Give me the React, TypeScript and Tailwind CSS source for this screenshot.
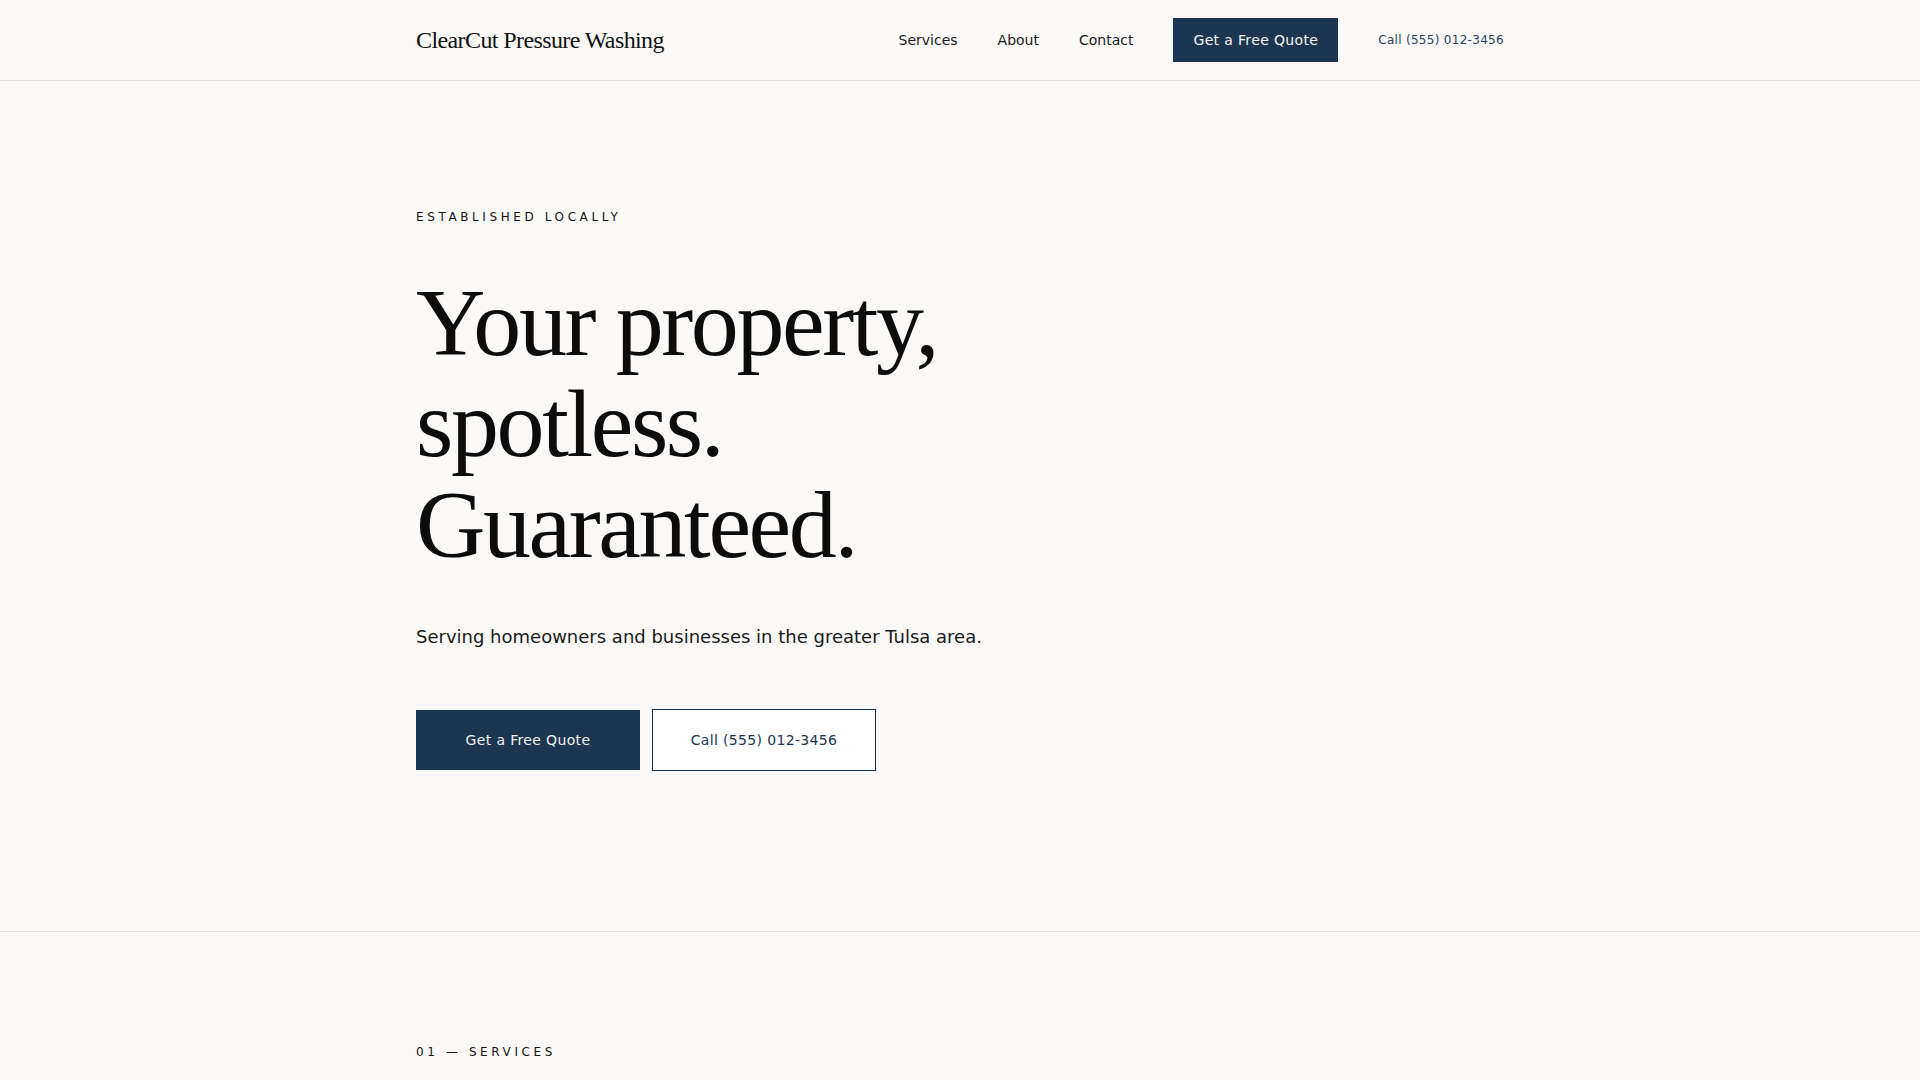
const navLinks = ['Services', 'About', 'Contact']

const sans = "font-['DejaVu_Sans',sans-serif]"
const serif = "font-['Liberation_Serif',serif]"

function Header() {
  return (
    <header className="box-content h-20 border-b border-[#e4e3e0] bg-[#faf9f7]">
      <div className="max-w-6xl mx-auto px-8 h-full flex items-center justify-between">
        <a className={`${serif} text-2xl tracking-tight text-[#111111]`}>ClearCut Pressure Washing</a>
        <nav className={`${sans} flex items-center gap-10 text-sm text-[#1a1a1a]`}>
          {navLinks.map((link) => (
            <a key={link}>{link}</a>
          ))}
          <button className="bg-[#1c3550] text-[#f5f5f2] px-5 py-3 tracking-wide">Get a Free Quote</button>
          <a className="text-xs tracking-wide text-[#2b4160]">Call (555) 012-3456</a>
        </nav>
      </div>
    </header>
  )
}

function Hero() {
  return (
    <section className="border-b border-[#e4e3e0]">
      <div className="max-w-6xl mx-auto px-8 pt-32 pb-40">
        <p className={`${sans} text-xs uppercase tracking-[0.3em] text-[#141414]`}>Established locally</p>
        <h1 className={`${serif} mt-12 text-8xl leading-[1.05] tracking-tight text-[#0c0c0c]`}>
          Your property,
          <br />
          spotless.
          <br />
          Guaranteed.
        </h1>
        <p className={`${sans} mt-12 text-lg leading-7 text-[#1a1a1a]`}>
          Serving homeowners and businesses in the greater Tulsa area.
        </p>
        <div className={`${sans} mt-[58px] flex items-center gap-3 text-sm tracking-wide`}>
          <button className="w-56 py-5 bg-[#1c3550] text-[#f2f2ee]">Get a Free Quote</button>
          <button className="w-56 py-5 border border-[#13294a] bg-white text-[#1c3550]">Call (555) 012-3456</button>
        </div>
      </div>
    </section>
  )
}

function ServicesIntro() {
  return (
    <section>
      <div className="max-w-6xl mx-auto px-8 pt-28 pb-24">
        <p className={`${sans} text-xs uppercase tracking-[0.3em] text-[#141414]`}>01 — Services</p>
      </div>
    </section>
  )
}

export default function App() {
  return (
    <div className="min-h-screen bg-[#faf9f7]">
      <Header />
      <Hero />
      <ServicesIntro />
    </div>
  )
}
